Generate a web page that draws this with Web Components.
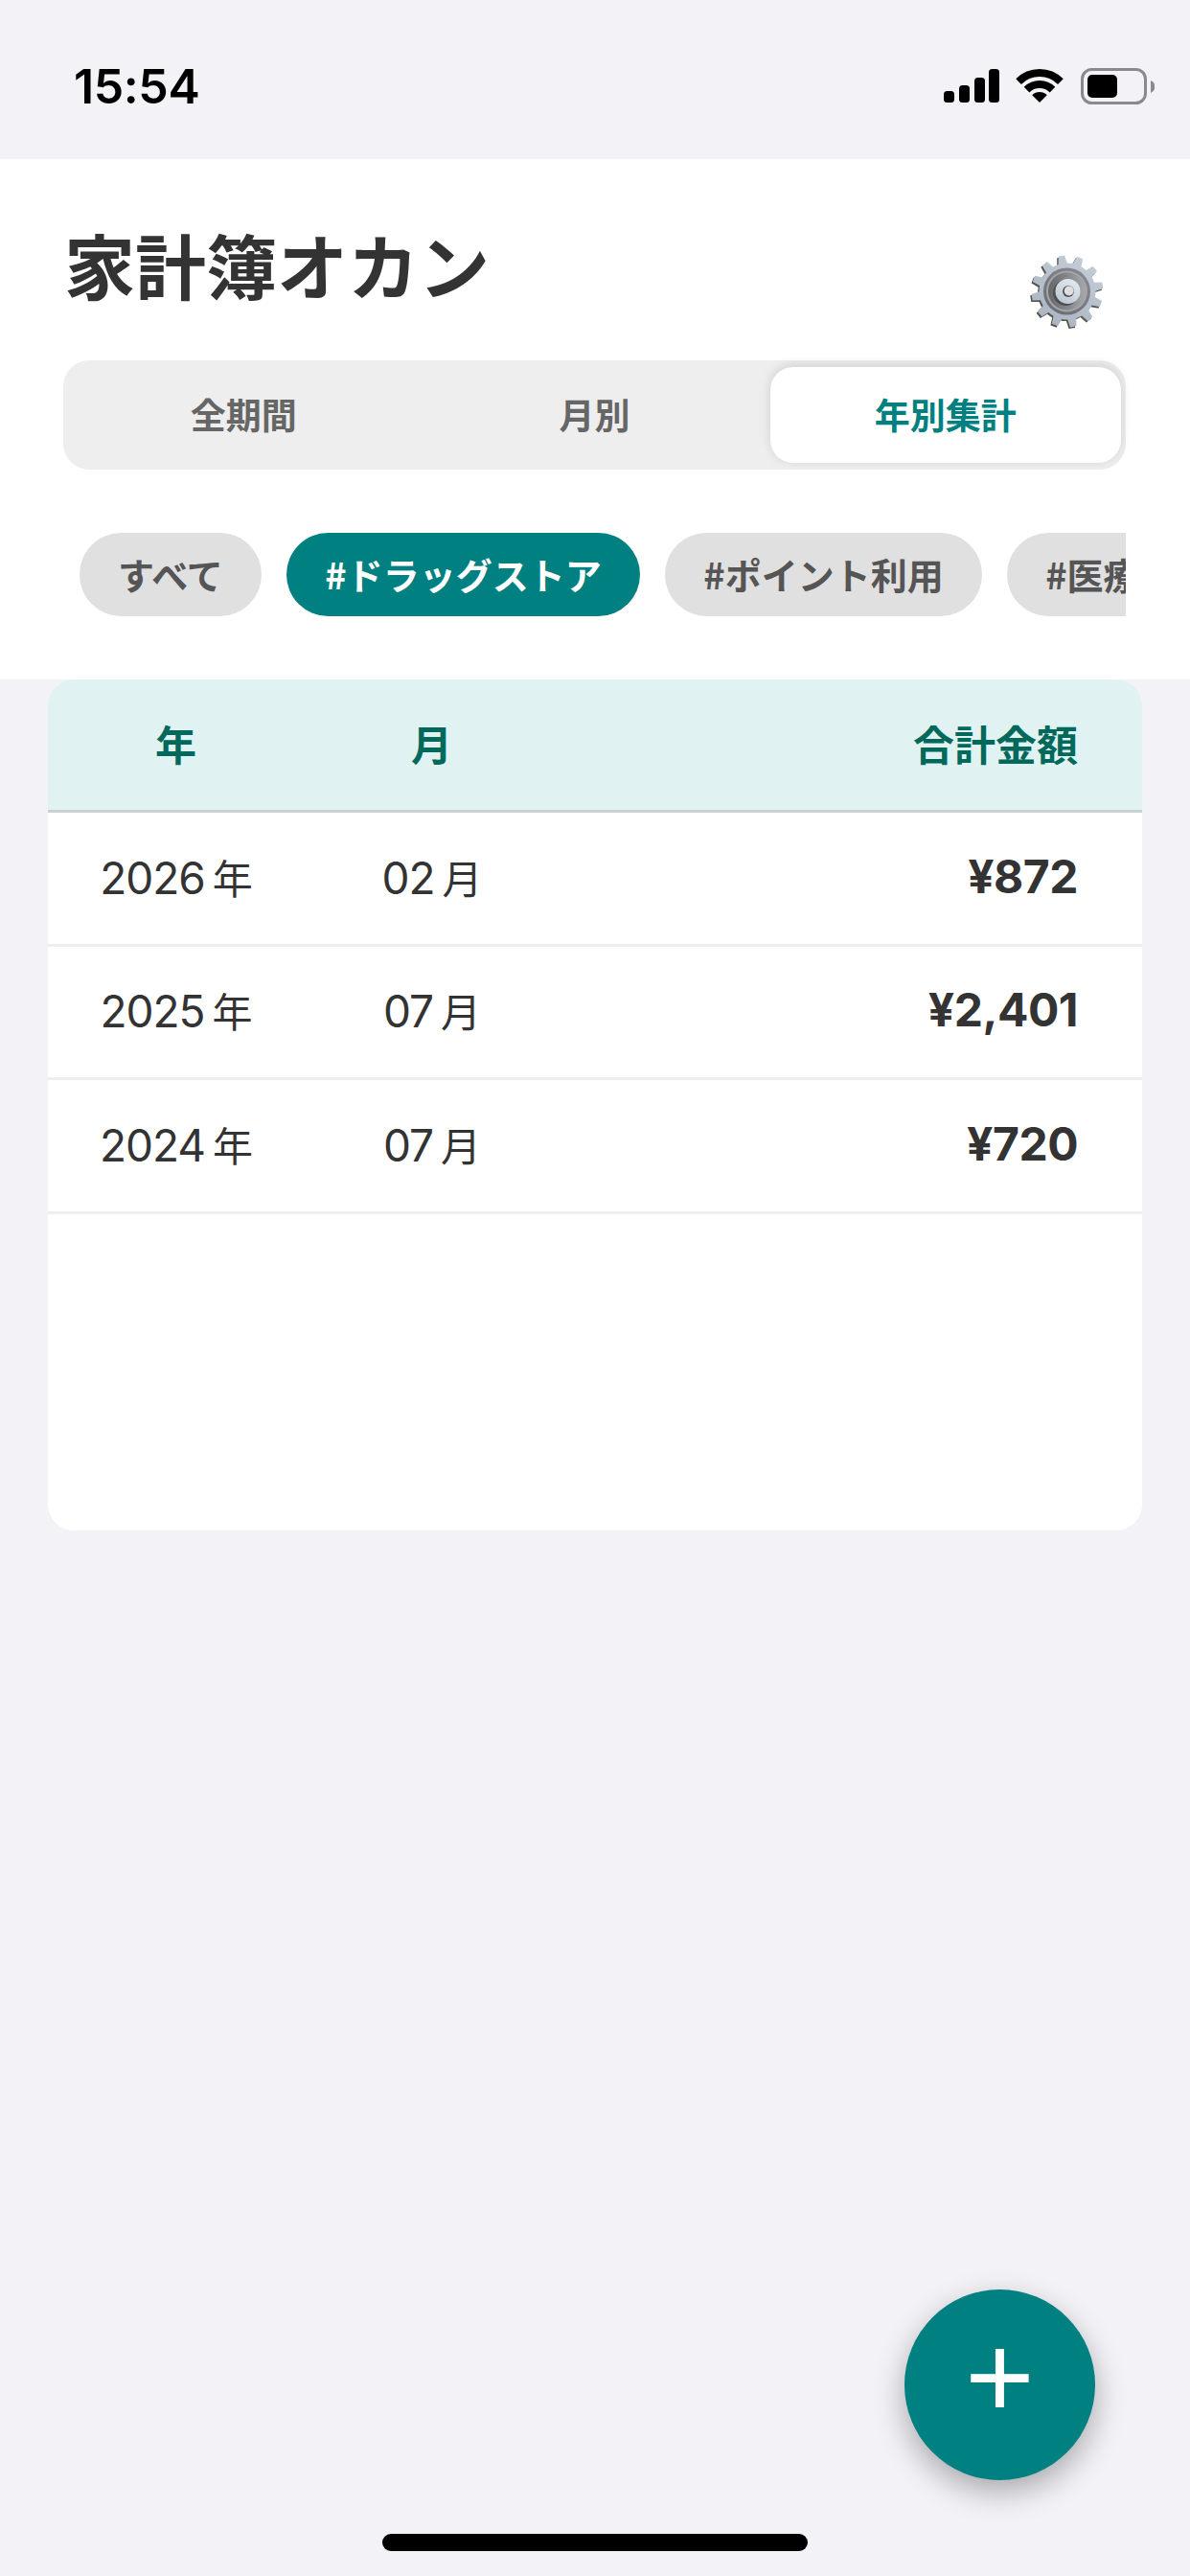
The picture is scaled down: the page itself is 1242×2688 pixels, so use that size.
<!DOCTYPE html>
<html lang="ja">
<head>
<meta charset="utf-8">
<title>家計簿オカン</title>
<style>
    html, body { margin: 0; background: #f2f2f7; }
</style>
</head>
<body>
<app-shell>
    <status-bar></status-bar>
    <app-header>
        <seg-tabs>
            <seg-tab>全期間</seg-tab>
            <seg-tab>月別</seg-tab>
            <seg-tab active>年別集計</seg-tab>
        </seg-tabs>
        <tag-chip>すべて</tag-chip>
        <tag-chip active>#ドラッグストア</tag-chip>
        <tag-chip>#ポイント利用</tag-chip>
        <tag-chip>#医療費</tag-chip>
    </app-header>
    <year-table>
        <year-row year="2026" month="02" amount="¥872"></year-row>
        <year-row year="2025" month="07" amount="¥2,401"></year-row>
        <year-row year="2024" month="07" amount="¥720"></year-row>
    </year-table>
</app-shell>

<script>
const CJK = '"Noto Sans CJK JP", "Liberation Sans", sans-serif';
const LATIN = 'Inter, "Noto Sans CJK JP", sans-serif';

class AppShell extends HTMLElement {
    constructor() {
        super();
        this.attachShadow({ mode: 'open' });
        this.shadowRoot.innerHTML = `
            <style>
                :host {
                    display: flex;
                    flex-direction: column;
                    position: relative;
                    width: 1242px;
                    height: 2688px;
                    overflow: hidden;
                    background: #f2f2f7;
                    font-family: ${CJK};
                }
                .fab {
                    position: absolute;
                    right: 99px;
                    bottom: 100px;
                    width: 199px;
                    height: 199px;
                    border-radius: 50%;
                    background: #008080;
                    box-shadow: 0 12px 32px rgba(0, 0, 0, 0.3);
                    color: #fff;
                    display: flex;
                    align-items: center;
                    justify-content: center;
                    font: 400 124px/1 "Liberation Sans", sans-serif;
                    padding-bottom: 17px;
                    box-sizing: border-box;
                }
                .home {
                    position: absolute;
                    left: 399px;
                    bottom: 26px;
                    width: 444px;
                    height: 18px;
                    border-radius: 9px;
                    background: #000;
                }
            </style>
            <slot></slot>
            <div class="fab">+</div>
            <div class="home"></div>
        `;
    }
}

class StatusBar extends HTMLElement {
    constructor() {
        super();
        this.attachShadow({ mode: 'open' });
        this.shadowRoot.innerHTML = `
            <style>
                :host {
                    display: flex;
                    justify-content: space-between;
                    align-items: center;
                    box-sizing: border-box;
                    height: 166px;
                    padding: 14px 37px 0 77px;
                    color: #000;
                }
                .time {
                    font: 600 50px/1 Inter, sans-serif;
                    letter-spacing: -0.4px;
                }
                .icons { display: flex; align-items: center; }
                svg { display: block; }
                .wifi { margin: 0 18px 0 17px; }
            </style>
            <span class="time">15:54</span>
            <div class="icons">
                <svg width="58" height="36" viewBox="0 0 58 36" fill="#000">
                    <rect x="0" y="23" width="11" height="12" rx="3.5"/>
                    <rect x="16" y="17" width="11" height="18" rx="3.5"/>
                    <rect x="32" y="9" width="11" height="26" rx="3.5"/>
                    <rect x="47" y="0" width="11" height="35" rx="3.5"/>
                </svg>
                <svg class="wifi" width="50" height="36" viewBox="0 0 50 36" fill="none" stroke="#000" stroke-width="8">
                    <path d="M3.08 13.08A31 31 0 0 1 46.92 13.08"/>
                    <path d="M11.56 21.56A19 19 0 0 1 38.44 21.56"/>
                    <path d="M25 35L17.22 27.22A11 11 0 0 1 32.78 27.22Z" fill="#000" stroke="none"/>
                </svg>
                <svg width="77" height="38" viewBox="0 0 77 38">
                    <rect x="1.5" y="1.5" width="66" height="35" rx="10" fill="none" stroke="#8a8a8e" stroke-width="3"/>
                    <rect x="7" y="7" width="31" height="24" rx="5" fill="#000"/>
                    <path d="M73 13a7 7 0 0 1 0 13z" fill="#8a8a8e"/>
                </svg>
            </div>
        `;
    }
}

class GearIcon extends HTMLElement {
    constructor() {
        super();
        this.attachShadow({ mode: 'open' });
        this.shadowRoot.innerHTML = `
            <style>
                :host { display: block; width: 80px; height: 80px; }
                svg { display: block; }
            </style>
            <svg width="80" height="80" viewBox="0 0 80 80">
                <defs>
                    <linearGradient id="body" x1="0.8" y1="0" x2="0.2" y2="1">
                        <stop offset="0" stop-color="#c4cdd8"/>
                        <stop offset="1" stop-color="#a9b4c1"/>
                    </linearGradient>
                    <linearGradient id="ring" x1="0.8" y1="0.1" x2="0.2" y2="0.9">
                        <stop offset="0" stop-color="#85878c"/>
                        <stop offset="1" stop-color="#6c6e72"/>
                    </linearGradient>
                    <linearGradient id="bowl" x1="0" y1="0.5" x2="1" y2="0.5">
                        <stop offset="0" stop-color="#66676a"/>
                        <stop offset="1" stop-color="#a6a7aa"/>
                    </linearGradient>
                    <linearGradient id="hub" x1="0.8" y1="0" x2="0.2" y2="1">
                        <stop offset="0" stop-color="#e4eaf0"/>
                        <stop offset="1" stop-color="#bcc6d0"/>
                    </linearGradient>
                </defs>
                <path class="shade" fill="#55534c" transform="translate(-1.4 1.6)"/>
                <path class="teeth" fill="url(#body)"/>
                <circle cx="40.5" cy="39" r="24.5" fill="url(#ring)"/>
                <circle cx="40.5" cy="39" r="21.5" fill="#a2a4a7"/>
                <circle cx="40.5" cy="39" r="19.5" fill="url(#bowl)"/>
                <circle cx="39.5" cy="40.5" r="13.5" fill="#505052"/>
                <circle cx="41.5" cy="39" r="13" fill="url(#hub)"/>
                <circle cx="42" cy="39" r="6" fill="#4d4d50"/>
                <circle cx="42.7" cy="38.5" r="5" fill="#dedee0"/>
            </svg>
        `;
        this.shadowRoot.querySelectorAll('.teeth, .shade').forEach((p) => {
            p.setAttribute('d', this._gearPath(41, 39, 37.5, 29.5, 12, -9.5));
        });
    }

    _gearPath(cx, cy, outer, root, count, start) {
        const pt = (r, deg) => {
            const a = ((deg - 90) * Math.PI) / 180;
            return `${(cx + r * Math.cos(a)).toFixed(2)} ${(cy + r * Math.sin(a)).toFixed(2)}`;
        };
        let d = '';
        for (let i = 0; i < count; i++) {
            const c = start + (i * 360) / count;
            d += `${i ? 'L' : 'M'}${pt(root, c - 9)}L${pt(outer, c - 5)}L${pt(outer, c + 5)}L${pt(root, c + 9)}`;
            d += `A${root} ${root} 0 0 1 ${pt(root, c + 21)}`;
        }
        return d + 'Z';
    }
}

class AppHeader extends HTMLElement {
    constructor() {
        super();
        this.attachShadow({ mode: 'open' });
        this.shadowRoot.innerHTML = `
            <style>
                :host {
                    display: block;
                    box-sizing: border-box;
                    height: 543px;
                    padding: 0 67px 0 66px;
                    background: #fff;
                }
                .top {
                    display: flex;
                    justify-content: space-between;
                    align-items: flex-start;
                    height: 210px;
                }
                h1 {
                    margin: 69px 0 0 1px;
                    font-size: 74px;
                    line-height: 80px;
                    font-weight: 700;
                    color: #333;
                }
                gear-icon { margin: 99px 22px 0 0; }
                .chips {
                    display: flex;
                    gap: 26.5px;
                    margin-top: 66px;
                    padding-left: 17px;
                    overflow: hidden;
                }
            </style>
            <div class="top">
                <h1>家計簿オカン</h1>
                <gear-icon></gear-icon>
            </div>
            <slot name="tabs"></slot>
            <div class="chips"><slot></slot></div>
        `;
    }

    connectedCallback() {
        const tabs = this.querySelector('seg-tabs');
        if (tabs) tabs.slot = 'tabs';
    }
}

class SegTabs extends HTMLElement {
    constructor() {
        super();
        this.attachShadow({ mode: 'open' });
        this.shadowRoot.innerHTML = `
            <style>
                :host {
                    display: flex;
                    box-sizing: border-box;
                    height: 114px;
                    padding: 7px 5px;
                    border-radius: 27px;
                    background: #eee;
                }
            </style>
            <slot></slot>
        `;
    }
}

class SegTab extends HTMLElement {
    constructor() {
        super();
        this.attachShadow({ mode: 'open' });
        this.shadowRoot.innerHTML = `
            <style>
                :host {
                    flex: 1;
                    display: flex;
                    align-items: center;
                    justify-content: center;
                    padding-bottom: 3px;
                    box-sizing: border-box;
                    border-radius: 24px;
                    font-size: 37px;
                    font-weight: 700;
                    color: #666;
                }
                :host([active]) {
                    background: #fff;
                    color: #008080;
                    box-shadow: 0 -2px 12px rgba(0, 0, 0, 0.13);
                }
            </style>
            <slot></slot>
        `;
    }
}

class TagChip extends HTMLElement {
    constructor() {
        super();
        this.attachShadow({ mode: 'open' });
        this.shadowRoot.innerHTML = `
            <style>
                :host {
                    flex: none;
                    display: flex;
                    align-items: center;
                    box-sizing: border-box;
                    height: 87px;
                    padding: 0 40px 2px;
                    border-radius: 44px;
                    background: #e0e0e0;
                    color: #555;
                    font-size: 38px;
                    font-weight: 700;
                    white-space: nowrap;
                }
                :host([active]) {
                    background: #008080;
                    color: #fff;
                }
            </style>
            <slot></slot>
        `;
    }
}

class YearTable extends HTMLElement {
    constructor() {
        super();
        this.attachShadow({ mode: 'open' });
        this.shadowRoot.innerHTML = `
            <style>
                :host {
                    display: block;
                    height: 888px;
                    margin: 0 50px;
                    border-radius: 27px;
                    overflow: hidden;
                    background: #fff;
                }
                .head {
                    display: grid;
                    grid-template-columns: 267px 267px 1fr;
                    align-items: center;
                    box-sizing: border-box;
                    height: 139.4px;
                    padding-bottom: 4px;
                    background: #e0f2f1;
                    border-bottom: 3.4px solid #c9d0d0;
                    font-size: 43px;
                    font-weight: 700;
                    color: #00695c;
                }
                .c { text-align: center; }
                .r { text-align: right; padding-right: 67px; }
            </style>
            <div class="head">
                <span class="c">年</span>
                <span class="c">月</span>
                <span class="r">合計金額</span>
            </div>
            <slot></slot>
        `;
    }
}

class YearRow extends HTMLElement {
    connectedCallback() {
        if (this.shadowRoot) return;
        this.attachShadow({ mode: 'open' });
        const year = this.getAttribute('year');
        const month = this.getAttribute('month');
        const amount = this.getAttribute('amount');
        this.shadowRoot.innerHTML = `
            <style>
                :host {
                    display: grid;
                    grid-template-columns: 267px 267px 1fr;
                    align-items: center;
                    box-sizing: border-box;
                    height: 139.4px;
                    padding-bottom: 4px;
                    border-bottom: 3.4px solid #eee;
                    color: #333;
                    font-family: ${LATIN};
                    font-size: 46px;
                    font-weight: 400;
                }
                .c { text-align: center; letter-spacing: -1px; }
                .r { text-align: right; padding-right: 67px; }
                .unit {
                    font-family: ${CJK};
                    font-size: 42px;
                    margin-left: 8px;
                }
                .amount {
                    font-weight: 700;
                    font-size: 48px;
                    letter-spacing: -0.5px;
                }
            </style>
            <span class="c">${year}<span class="unit">年</span></span>
            <span class="c">${month}<span class="unit">月</span></span>
            <span class="r amount">${amount}</span>
        `;
    }
}

customElements.define('app-shell', AppShell);
customElements.define('status-bar', StatusBar);
customElements.define('gear-icon', GearIcon);
customElements.define('app-header', AppHeader);
customElements.define('seg-tabs', SegTabs);
customElements.define('seg-tab', SegTab);
customElements.define('tag-chip', TagChip);
customElements.define('year-table', YearTable);
customElements.define('year-row', YearRow);
</script>
</body>
</html>
